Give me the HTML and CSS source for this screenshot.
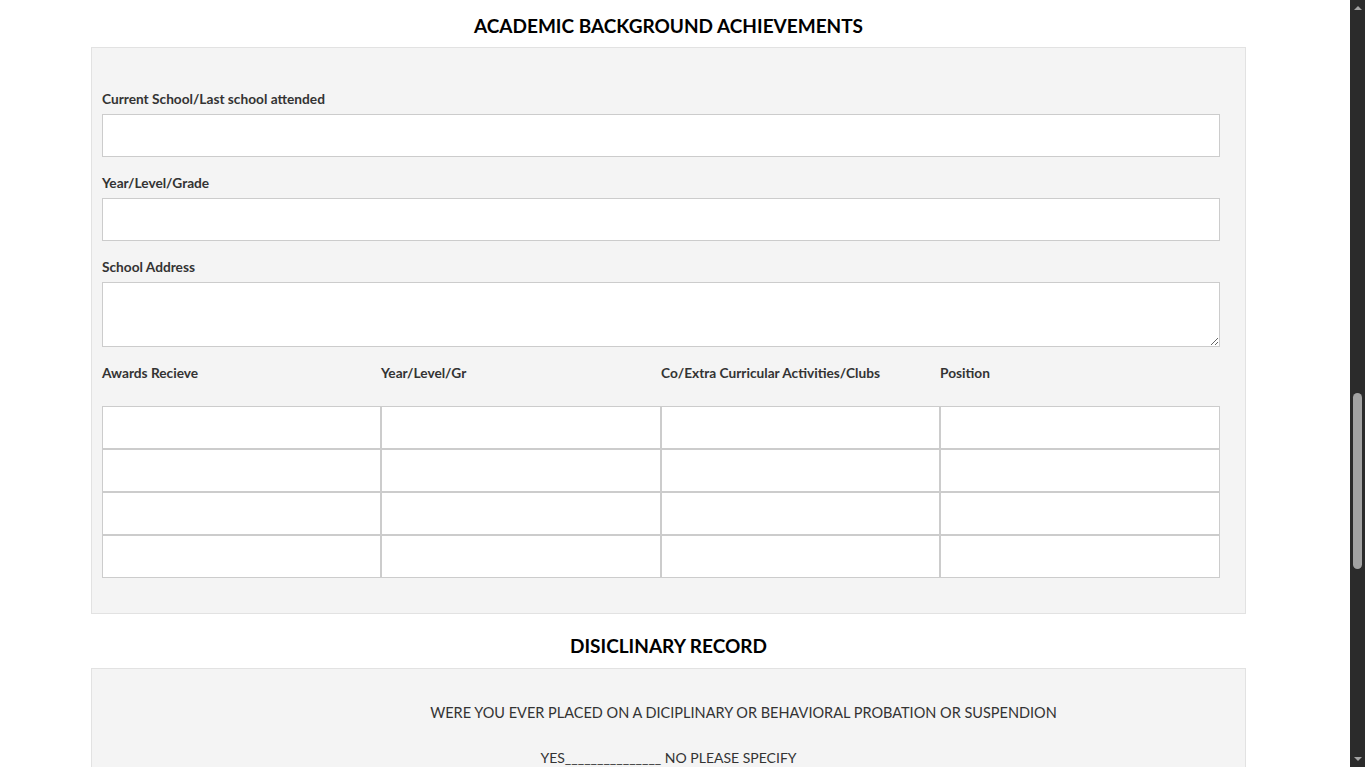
FILE: index.html
```html
<!DOCTYPE html>
<html lang="en">
<head>
<meta charset="utf-8">
<title>Application Form</title>
<link rel="stylesheet" href="styles.css">
</head>
<body>
<div class="viewport">
  <main class="page">
    <h2 class="section-title">ACADEMIC BACKGROUND ACHIEVEMENTS</h2>
    <section class="panel panel-academic">
      <div class="field">
        <label class="label">Current School/Last school attended</label>
        <input class="input" type="text">
      </div>
      <div class="field">
        <label class="label">Year/Level/Grade</label>
        <input class="input" type="text">
      </div>
      <div class="field">
        <label class="label">School Address</label>
        <textarea class="input textarea"></textarea>
      </div>
      <div class="grid grid-head">
        <span class="label">Awards Recieve</span>
        <span class="label">Year/Level/Gr</span>
        <span class="label">Co/Extra Curricular Activities/Clubs</span>
        <span class="label">Position</span>
      </div>
      <div class="grid grid-cells">
        <input class="cell" type="text"><input class="cell" type="text"><input class="cell" type="text"><input class="cell" type="text">
        <input class="cell" type="text"><input class="cell" type="text"><input class="cell" type="text"><input class="cell" type="text">
        <input class="cell" type="text"><input class="cell" type="text"><input class="cell" type="text"><input class="cell" type="text">
        <input class="cell" type="text"><input class="cell" type="text"><input class="cell" type="text"><input class="cell" type="text">
      </div>
    </section>
    <h2 class="section-title second">DISICLINARY RECORD</h2>
    <section class="panel panel-discipline">
      <p class="question">WERE YOU EVER PLACED ON A DICIPLINARY OR BEHAVIORAL PROBATION OR SUSPENDION</p>
      <p class="answer">YES_______________ NO PLEASE SPECIFY</p>
    </section>
  </main>
  <div class="scrollbar">
    <span class="arrow arrow-up"></span>
    <div class="track"><span class="thumb"></span></div>
    <span class="arrow arrow-down"></span>
  </div>
</div>
</body>
</html>
```
FILE: styles.css
```css
html, body {
  margin: 0;
  padding: 0;
  height: 767px;
  overflow: hidden;
  background: #fff;
}
body {
  font-family: Lato, "Liberation Sans", Arial, sans-serif;
  color: #333;
}
.viewport {
  display: flex;
  height: 767px;
}
.page {
  flex: 1;
  padding-left: 91px;
  overflow: hidden;
}
.section-title {
  width: 1155px;
  margin: 0;
  padding-top: 14px;
  margin-bottom: 10px;
  text-align: center;
  font-size: 19px;
  line-height: 23px;
  font-weight: 700;
  color: #000;
}
.section-title.second {
  padding-top: 20px;
  margin-bottom: 11px;
}
.panel {
  width: 1153px;
  background: #f4f4f4;
  border: 1px solid #e2e2e2;
}
.panel-academic {
  padding: 43px 25px 35px 10px;
  width: 1118px;
}
.field {
  display: flex;
  flex-direction: column;
  margin-bottom: 18px;
}
.label {
  font-size: 13.7px;
  line-height: 16px;
  font-weight: 700;
  color: #333;
  margin-bottom: 7px;
}
.input {
  box-sizing: border-box;
  width: 1118px;
  height: 43px;
  margin: 0;
  border: 1px solid #ccc;
  background: #fff;
  font: inherit;
}
.textarea {
  height: 65px;
  resize: vertical;
  display: block;
}
.grid {
  display: grid;
  grid-template-columns: 279px 280px 279px 280px;
  width: 1118px;
}
.grid-head {
  margin-bottom: 25px;
}
.grid-head .label {
  margin: 0;
}
.cell {
  box-sizing: border-box;
  width: 100%;
  height: 43px;
  margin: 0;
  border: 1px solid #ccc;
  background: #fff;
}
.panel-discipline {
  height: 120px;
  text-align: center;
}
.question {
  margin: 35px 0 0;
  padding-left: 150px;
  font-size: 14.5px;
  line-height: 18px;
  color: #333;
}
.answer {
  margin: 27px 0 0;
  font-size: 14px;
  line-height: 18px;
  color: #333;
}
.scrollbar {
  width: 15px;
  flex: none;
  background: #2b2b2b;
  display: flex;
  flex-direction: column;
  align-items: center;
}
.arrow {
  width: 0;
  height: 0;
  border-left: 4px solid transparent;
  border-right: 4px solid transparent;
  flex: none;
}
.arrow-up {
  margin-top: 6px;
  border-bottom: 4px solid #a3a3a3;
}
.arrow-down {
  margin-bottom: 6px;
  border-top: 4px solid #a3a3a3;
}
.track {
  flex: 1;
  width: 15px;
  display: flex;
  flex-direction: column;
  align-items: center;
  padding-top: 383px;
}
.thumb {
  width: 9px;
  height: 176px;
  border-radius: 5px;
  background: #a3a3a3;
}
```
